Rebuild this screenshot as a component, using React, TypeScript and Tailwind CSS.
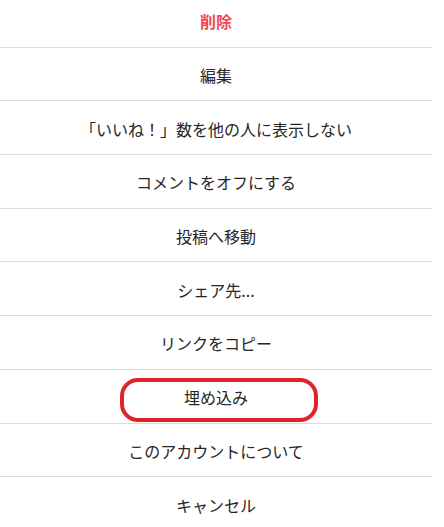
const items = [
  "削除",
  "編集",
  "「いいね！」数を他の人に表示しない",
  "コメントをオフにする",
  "投稿へ移動",
  "シェア先...",
  "リンクをコピー",
  "埋め込み",
  "このアカウントについて",
  "キャンセル",
];

export default function App() {
  return (
    <div className="w-[444px] h-[527px] overflow-hidden bg-white">
      <div className="w-[432px] -mt-[6px] font-['Noto_Sans_CJK_JP','Noto_Sans',sans-serif] text-[16px] text-[#262626]">
        {items.map((label, i) => (
          <div
            key={i}
            className={`relative h-[53.7px] flex items-center justify-center ${
              i < items.length - 1 ? "border-b border-[#dbdbdb]" : ""
            }`}
          >
            <span className={`pt-[2px] ${i === 0 ? "font-bold text-[#ed4956]" : ""}`}>{label}</span>
            {label === "埋め込み" && (
              <div className="absolute left-[120px] top-[8px] w-[198px] h-[44px] rounded-[18px] border-[4px] border-[#e0232b]" />
            )}
          </div>
        ))}
      </div>
    </div>
  );
}
